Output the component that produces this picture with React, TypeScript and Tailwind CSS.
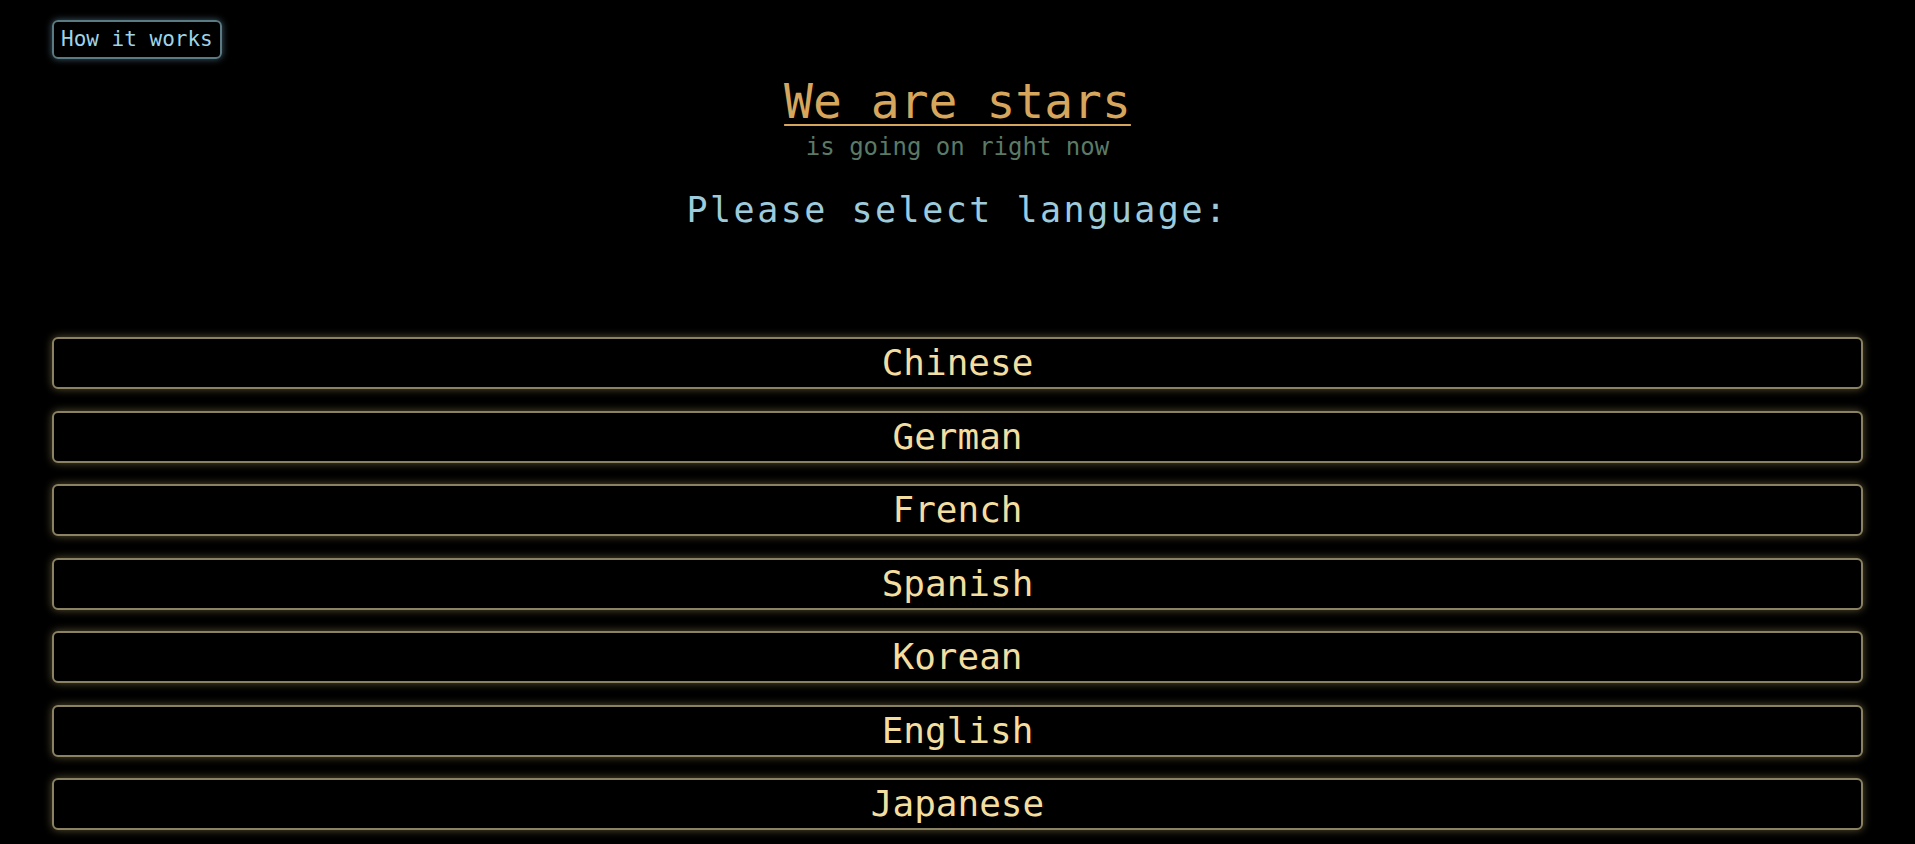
const languages = ["Chinese", "German", "French", "Spanish", "Korean", "English", "Japanese"];

const App = () => {
  return (
    <div className="min-h-screen bg-black px-[52px] pt-[20px] pb-10 font-['DejaVu_Sans_Mono',monospace]">
      <button className="h-[39px] px-[7px] rounded-md border-2 border-[#5a7a84] text-[21px] leading-none text-[#9fd3e6] shadow-[0_0_7px_rgba(120,170,190,0.55)]">
        How it works
      </button>

      <div className="flex flex-col items-center">
        <a className="mt-[14px] text-[48px] leading-[56px] text-[#d6a65c] underline decoration-2 underline-offset-[6px]">
          We are stars
        </a>
        <div className="mt-[4px] text-[24px] leading-[28px] text-[#5b7a66]">is going on right now</div>
        <h2 className="mt-[29px] text-[35px] leading-[40px] tracking-[2.5px] text-[#9dcbdc]">
          Please select language:
        </h2>
      </div>

      <div className="mt-[107px] flex flex-col gap-[21.5px]">
        {languages.map((lang) => (
          <button
            key={lang}
            className="h-[52px] w-full rounded-md border-2 border-[#8a8262] bg-black text-[36px] leading-none text-[#f3dea0] shadow-[0_0_9px_rgba(200,180,110,0.45)]"
          >
            {lang}
          </button>
        ))}
      </div>
    </div>
  );
};

export default App;
